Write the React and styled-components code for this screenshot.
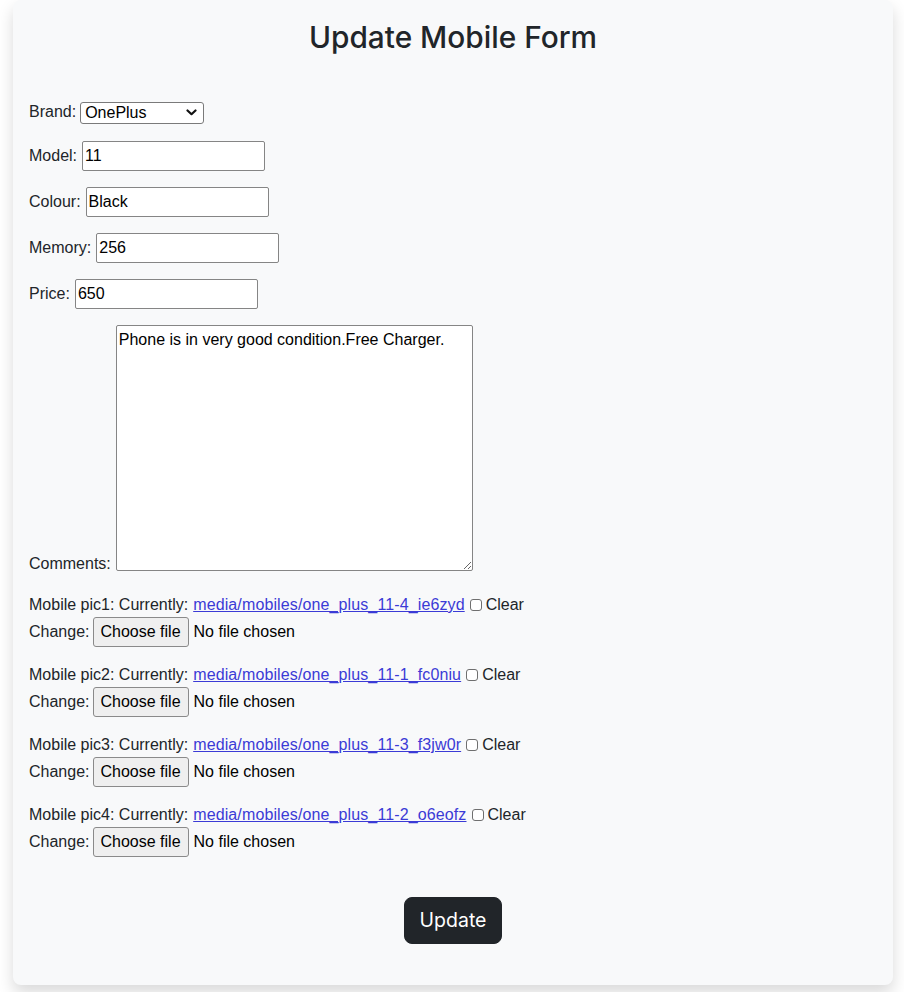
import React from "react";
import styled, { createGlobalStyle } from "styled-components";

const GlobalStyle = createGlobalStyle`
  body {
    margin: 0;
    background: #ffffff;
    font-family: "Liberation Sans", Arial, sans-serif;
    font-size: 16px;
    line-height: 1.5;
    color: #212529;
  }
  * { box-sizing: border-box; }
`;

const Page = styled.div`
  padding: 0 11px 7px 13px;
`;

const Card = styled.div`
  background: #f8f9fa;
  border-radius: 8px;
  box-shadow: 0 8px 16px rgba(0, 0, 0, 0.15);
  padding: 18px 16px 41px;
`;

const Title = styled.h2`
  margin: 0;
  text-align: center;
  font-family: Inter, "Liberation Sans", sans-serif;
  font-weight: 500;
  font-size: 29.8px;
  line-height: 38px;
  color: #212529;
`;

const Form = styled.form`
  display: flex;
  flex-direction: column;
  margin-top: 44px;
`;

const Row = styled.div`
  display: flex;
  align-items: ${(p) => (p.$bottom ? "flex-end" : "center")};
  gap: ${(p) => p.$gap || 5}px;
  margin-bottom: ${(p) => p.$mb ?? 16}px;
  min-height: 24px;
`;

const Label = styled.label`
  white-space: nowrap;
  margin-bottom: ${(p) => p.$drop || 0}px;
`;

const SelectWrap = styled.div`
  position: relative;
  width: 124px;
  height: 22px;
`;

const Select = styled.select`
  appearance: none;
  width: 100%;
  height: 100%;
  border: 1px solid #7a7a7a;
  border-radius: 3px;
  background: #fff;
  font: inherit;
  line-height: 18px;
  color: #000;
  padding: 0 20px 0 4px;
`;

const Chevron = styled.svg`
  position: absolute;
  right: 7px;
  top: 8px;
  pointer-events: none;
`;

const TextInput = styled.input`
  width: 183px;
  height: 30px;
  border: 1px solid #858585;
  border-radius: 2px;
  background: #fff;
  font: inherit;
  color: #000;
  padding: 1px 2px;
`;

const TextArea = styled.textarea`
  width: 357px;
  height: 246px;
  border: 1px solid #858585;
  border-radius: 2px;
  background: #fff;
  font: inherit;
  line-height: 1.5;
  color: #000;
  padding: 2px;
  margin: 0;
  resize: both;
`;

const PicBlock = styled.div`
  margin-bottom: 16px;
`;

const Line = styled.div`
  display: flex;
  align-items: center;
  height: ${(p) => p.$h || 24}px;
  white-space: nowrap;
`;

const FileLink = styled.a`
  color: #3b3bd6;
  text-decoration: underline;
  margin-left: 5px;
  letter-spacing: 0.12px;
`;

const Check = styled.input`
  appearance: none;
  width: 12px;
  height: 12px;
  border: 1px solid #6f6f6f;
  border-radius: 3px;
  background: #fff;
  margin: 0 4px 0 5px;
`;

const FileButton = styled.button`
  height: 30px;
  padding: 0 7px;
  margin-left: 3px;
  border: 1px solid #8a8a8a;
  border-radius: 3px;
  background: #efefef;
  font: inherit;
  color: #000;
`;

const NoFile = styled.span`
  margin-left: 5px;
  color: #000;
`;

const SubmitRow = styled.div`
  display: flex;
  justify-content: center;
  margin-top: 24px;
`;

const SubmitButton = styled.button`
  background: #212529;
  color: #fff;
  border: 1px solid #212529;
  border-radius: 8px;
  padding: 8px 15px;
  font-family: Inter, "Liberation Sans", sans-serif;
  font-size: 19.5px;
  line-height: 29px;
`;

const pics = [
  { n: 1, file: "media/mobiles/one_plus_11-4_ie6zyd" },
  { n: 2, file: "media/mobiles/one_plus_11-1_fc0niu" },
  { n: 3, file: "media/mobiles/one_plus_11-3_f3jw0r" },
  { n: 4, file: "media/mobiles/one_plus_11-2_o6eofz" },
];

const fields = [
  { label: "Model", value: "11" },
  { label: "Colour", value: "Black" },
  { label: "Memory", value: "256" },
  { label: "Price", value: "650" },
];

export default function App() {
  return (
    <Page>
      <GlobalStyle />
      <Card>
        <Title>Update Mobile Form</Title>
        <Form onSubmit={(e) => e.preventDefault()}>
          <Row $gap={4} $mb={17}>
            <Label>Brand:</Label>
            <SelectWrap>
              <Select defaultValue="OnePlus">
                <option>OnePlus</option>
                <option>Apple</option>
                <option>Samsung</option>
              </Select>
              <Chevron width="11" height="7" viewBox="0 0 11 7">
                <path d="M1.5 1.5 L5.5 5.2 L9.5 1.5" fill="none" stroke="#111" strokeWidth="2.2" strokeLinecap="round" strokeLinejoin="round" />
              </Chevron>
            </SelectWrap>
          </Row>

          {fields.map((f) => (
            <Row key={f.label}>
              <Label>{f.label}:</Label>
              <TextInput defaultValue={f.value} />
            </Row>
          ))}

          <Row $bottom $gap={5} $mb={22}>
            <Label $drop={-5}>Comments:</Label>
            <TextArea defaultValue="Phone is in very good condition.Free Charger." />
          </Row>

          {pics.map((p) => (
            <PicBlock key={p.n}>
              <Line>
                Mobile pic{p.n}: Currently:
                <FileLink href="#">{p.file}</FileLink>
                <Check type="checkbox" />
                Clear
              </Line>
              <Line $h={30}>
                Change:
                <FileButton type="button">Choose file</FileButton>
                <NoFile>No file chosen</NoFile>
              </Line>
            </PicBlock>
          ))}

          <SubmitRow>
            <SubmitButton type="submit">Update</SubmitButton>
          </SubmitRow>
        </Form>
      </Card>
    </Page>
  );
}
